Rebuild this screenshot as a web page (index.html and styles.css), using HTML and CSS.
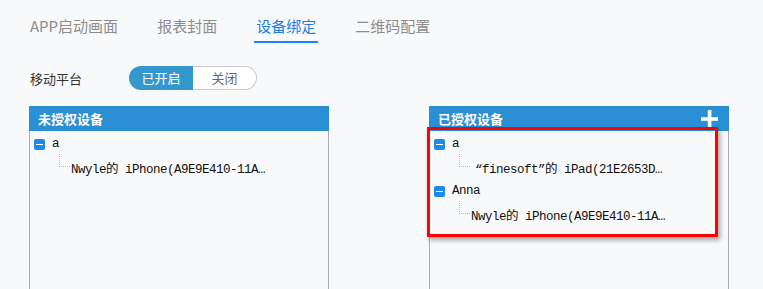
FILE: index.html
```html
<!DOCTYPE html>
<html lang="zh-CN">
<head>
    <meta charset="UTF-8">
    <meta name="viewport" content="width=device-width, initial-scale=1.0">
    <title>设备绑定</title>
    <link rel="stylesheet" href="styles.css">
</head>
<body>
    <!-- Tabs -->
    <div class="tabs">
        <span class="tab">APP启动画面</span>
        <span class="tab">报表封面</span>
        <span class="tab active">设备绑定</span>
        <span class="tab">二维码配置</span>
    </div>

    <!-- Mobile platform switch -->
    <div class="switch-row">
        <span class="switch-label">移动平台</span>
        <div class="switch">
            <span class="switch-btn on">已开启</span>
            <span class="switch-btn off">关闭</span>
        </div>
    </div>

    <!-- Device lists -->
    <div class="panels">
        <div class="panel">
            <div class="panel-header">
                <span>未授权设备</span>
            </div>
            <div class="panel-body">
                <div class="node"><span class="minus"></span><span>a</span></div>
                <div class="leaf"><span class="line"></span><span>Nwyle的 iPhone(A9E9E410-11A…</span></div>
            </div>
        </div>

        <div class="panel">
            <div class="panel-header">
                <span>已授权设备</span>
                <svg class="plus" width="17" height="18" viewBox="0 0 17 18">
                    <rect x="6.8" y="0" width="3.6" height="18" fill="#fff"/>
                    <rect x="0" y="7.2" width="17" height="3.6" fill="#fff"/>
                </svg>
            </div>
            <div class="panel-body">
                <div class="node"><span class="minus"></span><span>a</span></div>
                <div class="leaf"><span class="line"></span><span class="quoted">“finesoft”的 iPad(21E2653D…</span></div>
                <div class="node"><span class="minus"></span><span>Anna</span></div>
                <div class="leaf"><span class="line"></span><span>Nwyle的 iPhone(A9E9E410-11A…</span></div>
            </div>
            <!-- highlight box drawn over the tree -->
            <div class="highlight"></div>
        </div>
    </div>
</body>
</html>
```

FILE: styles.css
```css
/* Page */
body {
    margin: 0;
    background-color: #f8f9fb;
    font-family: "Noto Sans CJK SC", "Noto Sans", sans-serif;
    overflow: hidden;
}

/* Tabs */
.tabs {
    display: flex;
    gap: 35px;
    padding: 16px 0 0 28px;
}

.tab {
    font-size: 15px;
    line-height: 20px;
    color: #8c8c8c;
    padding: 0 2px 5px;
    border-bottom: 2px solid transparent;
}

.tab.active {
    color: #1f7cf0;
    border-bottom-color: #1a85ff;
}

/* Switch */
.switch-row {
    display: flex;
    align-items: center;
    padding-left: 30px;
    margin-top: 23px;
}

.switch-label {
    font-size: 13px;
    color: #333;
    width: 99px;
}

.switch {
    display: flex;
    height: 24px;
}

.switch-btn {
    width: 64px;
    box-sizing: border-box;
    font-size: 13px;
    line-height: 24px;
    text-align: center;
}

.switch-btn.on {
    background-color: #3598cd;
    color: #fff;
    border-radius: 12px 0 0 12px;
}

.switch-btn.off {
    background-color: #fff;
    color: #666;
    border: 1px solid #c8c8c8;
    border-left: none;
    line-height: 22px;
    border-radius: 0 12px 12px 0;
}

/* Panels */
.panels {
    display: flex;
    gap: 100px;
    padding-left: 29px;
    margin-top: 16px;
}

.panel {
    position: relative;
    width: 300px;
}

.panel-header {
    display: flex;
    justify-content: space-between;
    align-items: center;
    height: 25px;
    padding: 0 11px 0 9px;
    background-color: #2b8fd6;
    color: #fff;
    font-size: 13px;
    font-weight: bold;
}

.panel-body {
    height: 170px;
    padding-top: 1px;
    border-left: 1px solid #a9adb2;
    border-right: 1px solid #a9adb2;
    font-family: "Liberation Mono", "Noto Sans CJK SC", monospace;
    font-size: 12.5px;
    letter-spacing: -0.5px;
    color: #111;
}

/* Tree rows */
.node {
    display: flex;
    align-items: center;
    height: 24px;
    padding-left: 4px;
}

.minus {
    position: relative;
    width: 11px;
    height: 11px;
    margin-right: 7px;
    border-radius: 2px;
    background-color: #1e88e8;
}

.minus::after {
    content: "";
    position: absolute;
    left: 2px;
    right: 2px;
    top: 5px;
    height: 1px;
    background-color: #fff;
}

.leaf {
    display: flex;
    align-items: center;
    height: 23px;
}

.line {
    align-self: flex-start;
    width: 11px;
    height: 13px;
    margin: -2px 1px 0 29px;
    border-left: 1px dotted #bbb;
    border-bottom: 1px dotted #bbb;
    box-sizing: border-box;
}

.quoted {
    padding-left: 4px;
}

/* Red highlight box */
.highlight {
    position: absolute;
    left: -2px;
    top: 21px;
    width: 291px;
    height: 110px;
    box-sizing: border-box;
    border: 3px solid #f00;
    box-shadow: 2px 3px 5px rgba(0, 0, 0, 0.35);
}
```
